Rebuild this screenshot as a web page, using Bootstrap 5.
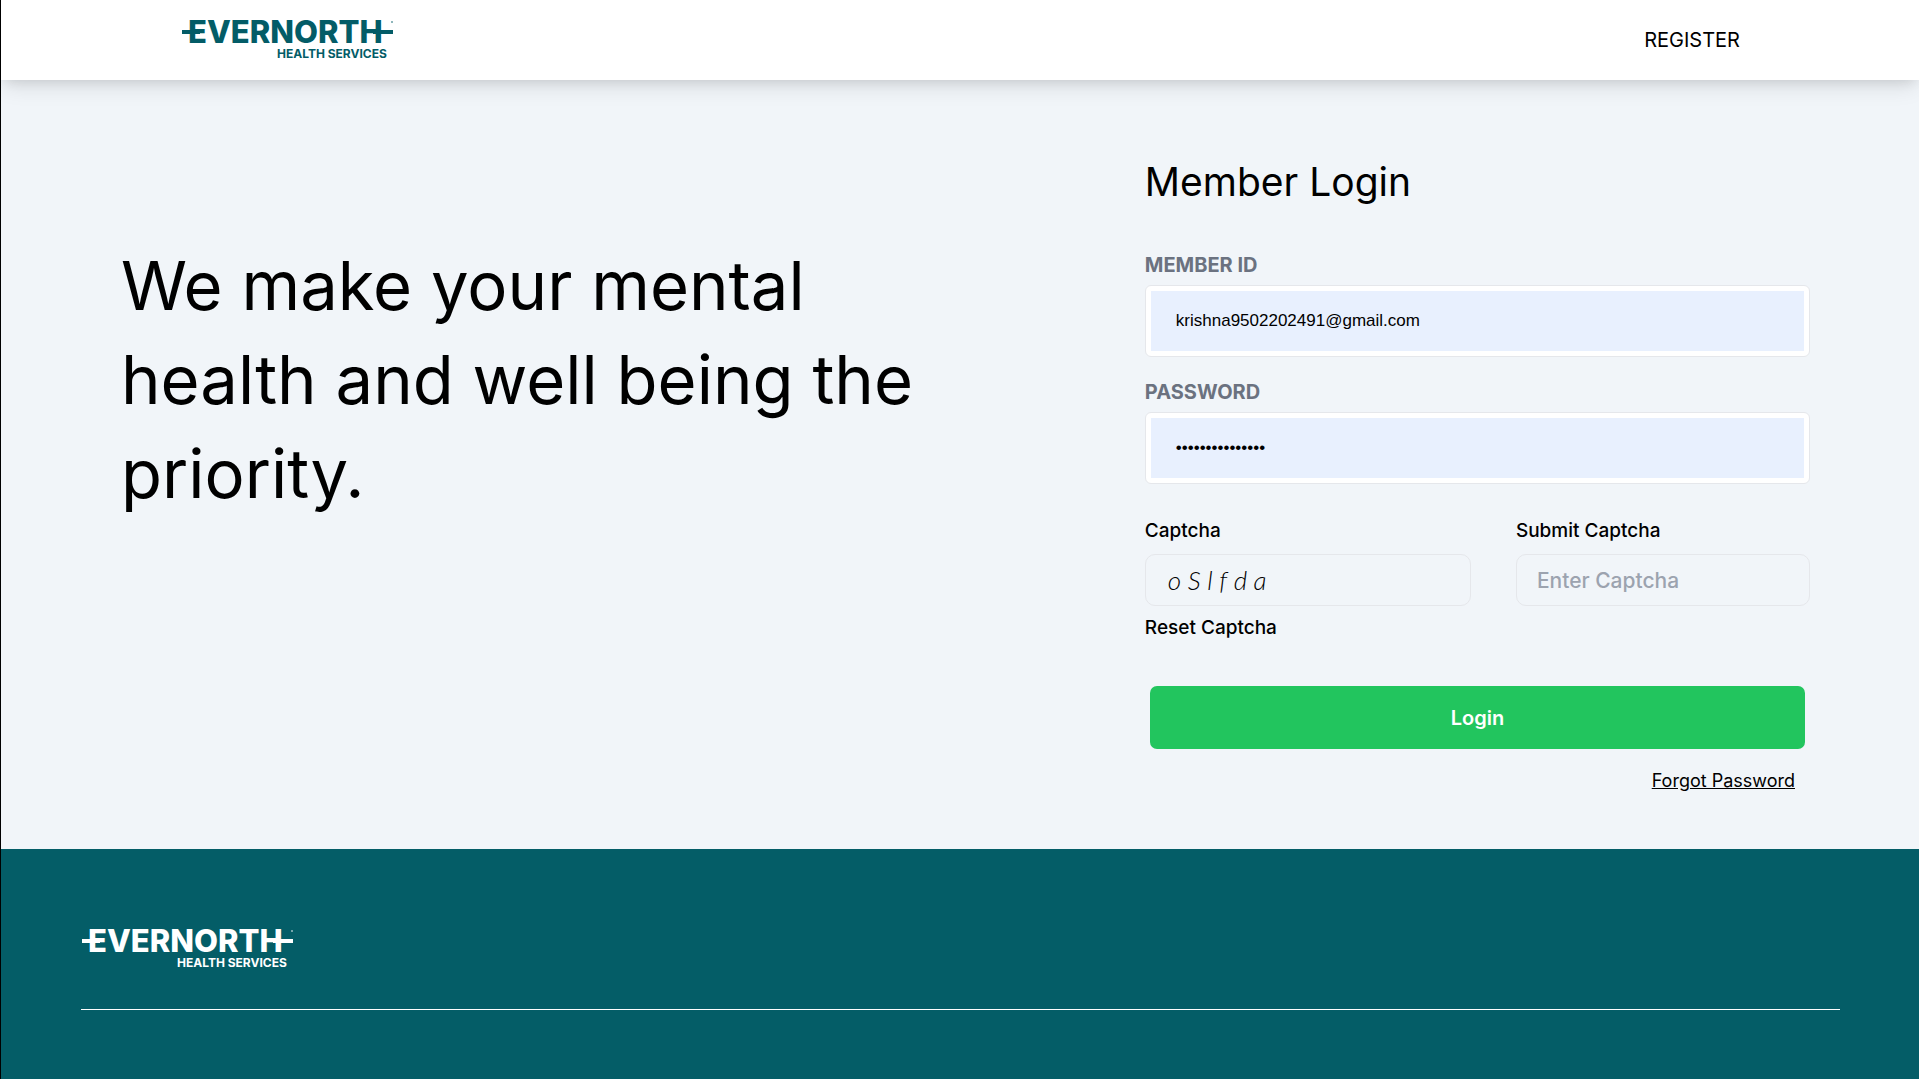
<!DOCTYPE html>
<html lang="en">
<head>
<meta charset="utf-8">
<meta name="viewport" content="width=device-width, initial-scale=1">
<title>Evernorth Health Services - Member Login</title>
<link href="https://cdn.jsdelivr.net/npm/bootstrap@5.3.0/dist/css/bootstrap.min.css" rel="stylesheet">
<style>
  body { font-family: Inter, "Open Sans", sans-serif; color: #000; background: #f1f5f9; border-left: 1px solid #000; }
  a { color: #000; }
  .site-header { height: 80px; padding: 0 179px 0 180px; background: #fff; box-shadow: 0 10px 20px -3px rgba(0,0,0,.1), 0 4px 12px -4px rgba(0,0,0,.12); }
  .register-link { font-size: 20px; line-height: 24px; }
  .brand-logo { display: block; width: 214px; height: 42px; color: #035c67; overflow: visible; }
  .brand-word { font: 800 31px Inter, sans-serif; }
  .brand-sub { font: 700 12px Inter, sans-serif; }
  .hero-col { padding: 159px 150px 0 120px; }
  .hero-title { font-size: 67px; line-height: 94px; font-weight: 400; margin: 0; }
  .login-col { padding: 76px 109px 55px 25px; }
  .login-title { font-size: 39px; line-height: 52px; font-weight: 400; margin: 0 0 42px; }
  .field-label { display: block; font-size: 20px; line-height: 30px; font-weight: 700; color: #6b7280; margin-bottom: 5px; }
  .field-frame { padding: 5px; background: #fff; border: 1px solid #e5e7eb; border-radius: 6px; margin-bottom: 20px; }
  .field-input { display: block; width: 100%; height: 60px; padding: 0 25px; border: 0; background: #e8f0fe; color: #000; font: 17px "Liberation Sans", Arial, sans-serif; }
  .captcha-row { padding-top: 14px; gap: 45px; }
  .captcha-show { flex: 326 1 0; }
  .captcha-enter { flex: 294 1 0; }
  .small-label { display: block; font-size: 19px; line-height: 26px; font-weight: 500; margin-bottom: 10px; }
  .captcha-input { display: block; width: 100%; height: 52px; padding: 0 20px; border: 1px solid #e5e7eb; border-radius: 10px; background: transparent; color: #000; font-size: 21px; font-weight: 500; }
  .captcha-input::placeholder { color: #9ca3af; opacity: 1; }
  .captcha-code { font: italic 300 26px Lato, sans-serif; padding-left: 22px; }
  .reset-btn { font-size: 19px; line-height: 26px; font-weight: 500; margin-top: 9px; padding: 0; border: 0; background: none; color: #000; }
  .login-btn { display: block; height: 63px; margin: 45px 5px 0; border: 0; border-radius: 7px; background: #22c55e; color: #fff; font-size: 20px; font-weight: 600; }
  .forgot-link { font-size: 18px; line-height: 26px; margin: 19px 15px 0 0; }
  .site-footer { background: #045d67; padding: 79px 79px 0 80px; min-height: 230px; }
  .site-footer .brand-logo { color: #fff; }
  .footer-line { margin: 39px 0 0; border-top: 1px solid #fff; opacity: 1; }
</style>
</head>
<body class="d-flex flex-column min-vh-100">
<header class="site-header d-flex align-items-center justify-content-between position-relative">
  <a href="#" aria-label="Evernorth Health Services">
    <svg class="brand-logo" viewBox="0 0 214 42" fill="currentColor">
      <text class="brand-word" x="7" y="24">EVERNORTH</text>
      <path d="M1 11h18v4H1zM192 11h20v4h-20z"/><circle cx="211" cy="3" r="1" opacity=".6"/>
      <text class="brand-sub" x="96" y="39">HEALTH SERVICES</text>
    </svg>
  </a>
  <a class="register-link text-decoration-none" href="#">REGISTER</a>
</header>
<main class="row g-0">
  <section class="col-lg-7 hero-col">
    <h1 class="hero-title">We make your mental health and well being the priority.</h1>
  </section>
  <section class="col-lg-5 login-col">
    <h2 class="login-title">Member Login</h2>
    <form class="d-flex flex-column">
      <label class="field-label" for="member">MEMBER ID</label>
      <div class="field-frame"><input class="field-input" id="member" type="text" value="krishna9502202491@gmail.com"></div>
      <label class="field-label" for="pass">PASSWORD</label>
      <div class="field-frame"><input class="field-input" id="pass" type="password" value="abcdefghijklmno"></div>
      <div class="d-flex captcha-row">
        <div class="captcha-show">
          <label class="small-label" for="code">Captcha</label>
          <input class="captcha-input captcha-code" id="code" type="text" value="o S l f d a" readonly>
          <button class="reset-btn" type="button">Reset Captcha</button>
        </div>
        <div class="captcha-enter">
          <label class="small-label" for="answer">Submit Captcha</label>
          <input class="captcha-input" id="answer" type="text" placeholder="Enter Captcha">
        </div>
      </div>
      <button class="login-btn" type="button">Login</button>
      <a class="forgot-link align-self-end" href="#">Forgot Password</a>
    </form>
  </section>
</main>
<footer class="site-footer flex-grow-1">
  <svg class="brand-logo" viewBox="0 0 214 42" fill="currentColor" role="img" aria-label="Evernorth Health Services">
    <text class="brand-word" x="7" y="24">EVERNORTH</text>
    <path d="M1 11h18v4H1zM192 11h20v4h-20z"/><circle cx="211" cy="3" r="1" opacity=".6"/>
    <text class="brand-sub" x="96" y="39">HEALTH SERVICES</text>
  </svg>
  <hr class="footer-line">
</footer>
<script src="https://cdn.jsdelivr.net/npm/bootstrap@5.3.0/dist/js/bootstrap.bundle.min.js"></script>
</body>
</html>
